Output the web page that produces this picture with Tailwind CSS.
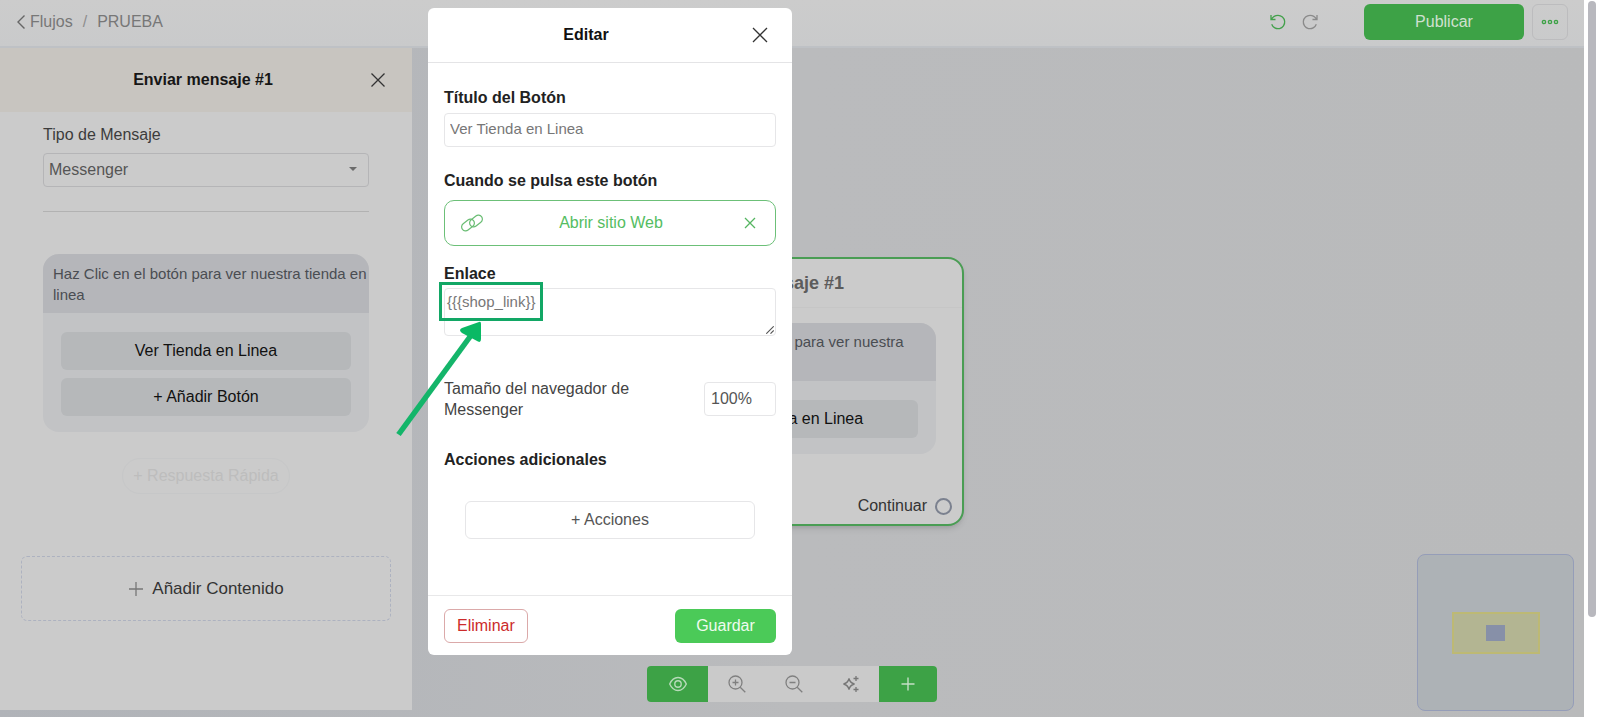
<!DOCTYPE html>
<html lang="es">
<head>
<meta charset="utf-8">
<meta name="viewport" content="width=device-width, initial-scale=1">
<title>Flujos / PRUEBA</title>
<script src="https://cdn.jsdelivr.net/npm/@tailwindcss/browser@4"></script>
</head>
<body class="flex h-screen overflow-hidden bg-white font-['Liberation_Sans',Arial,sans-serif] text-base leading-5 text-[#333]">
<div class="relative flex min-w-0 flex-1 flex-col bg-linear-to-r from-[#b0b3b8] via-[#babbbd] via-50% to-[#b9babb]">

  <header class="flex h-12 shrink-0 items-start justify-between border-b-2 border-[#bec1c5] bg-linear-to-b from-[#cccccc] to-[#c9cacb] pt-1 pr-4 pl-4">
    <nav class="flex h-9 items-center text-[#777]" aria-label="Ruta">
      <a href="#" class="flex items-center gap-1">
        <svg class="h-4 w-2.5" viewBox="0 0 10 16" fill="none" stroke="#666" stroke-width="1.4"><path d="M8.500 1.500 2 8l6.500 6.500"/></svg>
        Flujos</a>
      <span class="px-2.5 text-[#8e8e8e]">/</span>
      <span>PRUEBA</span>
    </nav>
    <div class="flex items-center">
      <button class="mr-4" aria-label="Deshacer">
        <svg class="size-4" viewBox="0 0 16 16" fill="none" stroke="#43a04b" stroke-width="1.300"><path d="M1 1v4.500h4.500M1.300 5.300C3 2.500 5 1.300 8 1.300a6.700 6.700 0 1 1-6.300 9"/></svg>
      </button>
      <button class="mr-[46px]" aria-label="Rehacer">
        <svg class="size-4" viewBox="0 0 16 16" fill="none" stroke="#8a8a8a" stroke-width="1.300"><path d="M15 1v4.500h-4.500M14.700 5.300C13 2.500 11 1.300 8 1.300a6.700 6.700 0 1 0 6.300 9"/></svg>
      </button>
      <button class="mr-2 h-9 w-40 rounded-md bg-[#3da246] text-[#d0e0d0]">Publicar</button>
      <button class="flex size-9 items-center justify-center rounded-md border border-[#bcbcbe]" aria-label="Más opciones">
        <svg class="h-1.5 w-[18px]" viewBox="0 0 18 6" fill="none" stroke="#3da246" stroke-width="1.400"><circle cx="3" cy="3" r="1.600"/><circle cx="9" cy="3" r="1.600"/><circle cx="15" cy="3" r="1.600"/></svg>
      </button>
    </div>
  </header>

  <div class="flex min-h-0 flex-1">
    <aside class="mb-[7px] w-[412px] shrink-0 overflow-hidden bg-[#cbcbcb]">
      <div class="flex h-16 items-center bg-[#c8c5c0] pr-[26px] pl-6">
        <h2 class="flex-1 pl-3 text-center font-bold text-[#161616]">Enviar mensaje #1</h2>
        <button aria-label="Cerrar panel"><svg class="size-4" viewBox="0 0 16 16" stroke="#333" stroke-width="1.300"><path d="M1.500 1.500l13 13M14.500 1.500l-13 13"/></svg></button>
      </div>
      <div class="px-[43px] pt-3">
        <label for="tipo" class="block leading-[22px] text-[#3c3c3c]">Tipo de Mensaje</label>
        <div class="relative mt-[7px]">
          <select id="tipo" class="block h-[34px] w-full appearance-none rounded border border-[#b5b5b7] bg-transparent px-[5px] text-[#555]"><option>Messenger</option></select>
          <svg class="pointer-events-none absolute top-[14px] right-3 h-1 w-2" viewBox="0 0 8 4" fill="#6b6b6b"><path d="M0 0h8L4 4z"/></svg>
        </div>
        <hr class="mt-6 border-[#b2b2b2]">
        <div class="mt-[42px] overflow-hidden rounded-[16px] bg-[#c2c3c5]">
          <p class="bg-[#b5b6ba] pt-[9px] pb-2 pl-2.5 text-[15px] leading-[21px] text-[#4a4d52]">Haz Clic en el botón para ver nuestra tienda en linea</p>
          <div class="flex flex-col gap-2 px-[18px] pt-[19px] pb-4 text-[#111]">
            <button class="h-[38px] rounded-md bg-[#b6b8ba]">Ver Tienda en Linea</button>
            <button class="h-[38px] rounded-md bg-[#b6b8ba]">+ Añadir Botón</button>
          </div>
        </div>
        <div class="mt-[26px] flex justify-center"><button class="h-9 rounded-full border border-[#c6c7c8] px-2.5 text-[#bdbdbd]">+ Respuesta Rápida</button></div>
      </div>
      <div class="px-[21px] pt-[62px]">
        <button class="flex h-[65px] w-full items-center justify-center gap-2 rounded-md border border-dashed border-[#adb2c0] text-[17px]">
          <svg class="size-4" viewBox="0 0 16 16" stroke="#777" stroke-width="1.300"><path d="M8 1v14M1 8h14"/></svg>
          Añadir Contenido</button>
      </div>
    </aside>

    <main class="relative min-w-0 flex-1">
      <!-- Flow node on the free canvas -->
      <section class="absolute top-[209px] left-[208px] w-[344px] rounded-[16px] border-2 border-[#4a9d54] bg-[#cbcbcb] pb-2 shadow-md shadow-black/10">
        <h3 class="border-b border-[#c6c6c6] pt-3.5 pr-[118px] pb-3.5 text-right text-lg leading-5 font-bold whitespace-nowrap text-[#5c5c5c]">Enviar mensaje #1</h3>
        <div class="mx-[26px] mt-[15px] overflow-hidden rounded-[16px] bg-[#c2c3c5]">
          <p class="bg-[#b5b6ba] px-2 pt-2 pb-2 text-[15px] leading-[21px] text-[#4a4d52]">Haz Clic en el botón para ver nuestra tienda en linea</p>
          <div class="flex px-[18px] pt-[19px] pb-4 text-[#111]"><button class="h-[38px] flex-1 rounded-md bg-[#b6b8ba]">Ver Tienda en Linea</button></div>
        </div>
        <div class="mt-[42px] flex items-center justify-end gap-2 pr-2.5">Continuar <span class="size-[17px] rounded-full border-2 border-[#7b818f]"></span></div>
      </section>
      <!-- Minimap -->
      <div class="absolute right-2.5 bottom-1.5 flex size-[157px] items-center justify-center rounded-lg border border-[#959db8] bg-[#adb2b6]">
        <div class="flex h-[42px] w-[88px] items-center justify-center border-2 border-[#bdb974] bg-[#b3b592]"><div class="h-4 w-[19px] bg-[#8790a8]"></div></div>
      </div>
    </main>
  </div>

  <!-- Canvas tools -->
  <div class="absolute bottom-[15px] left-1/2 flex h-9 w-[290px] -translate-x-1/2 overflow-hidden rounded bg-[#cacaca]">
    <button class="flex w-[61px] items-center justify-center bg-[#3da246]" aria-label="Vista previa"><svg class="h-4 w-[18px]" viewBox="0 0 18 16" fill="none" stroke="#b7dab9" stroke-width="1.400"><path d="M.7 8C2.500 4 5.500 1.500 9 1.500S15.500 4 17.300 8C15.500 12 12.500 14.500 9 14.500S2.500 12 .7 8z"/><circle cx="9" cy="8" r="3.200"/></svg></button>
    <button class="flex flex-1 items-center justify-center" aria-label="Acercar"><svg class="size-[18px]" viewBox="0 0 18 18" fill="none" stroke="#808080" stroke-width="1.300"><circle cx="7.500" cy="7.500" r="6.500"/><path d="M12.200 12.200 17.300 17.300M4.500 7.500h6M7.500 4.500v6"/></svg></button>
    <button class="flex flex-1 items-center justify-center" aria-label="Alejar"><svg class="size-[18px]" viewBox="0 0 18 18" fill="none" stroke="#808080" stroke-width="1.300"><circle cx="7.500" cy="7.500" r="6.500"/><path d="M12.200 12.200 17.300 17.300M4.500 7.500h6"/></svg></button>
    <button class="flex flex-1 items-center justify-center" aria-label="Ordenar"><svg class="size-[18px]" viewBox="0 0 18 18" fill="none" stroke="#777" stroke-width="1.300"><path d="M7 3.500Q8 8 12.500 9 8 10 7 14.500 6 10 1.500 9 6 8 7 3.500zM14 1v5M11.500 3.500h5M14 12v5M11.500 14.500h5"/></svg></button>
    <button class="flex w-[58px] items-center justify-center bg-[#3da246]" aria-label="Añadir"><svg class="size-3.5" viewBox="0 0 14 14" stroke="#c5dfc6" stroke-width="1.400"><path d="M7 .5v13M.5 7h13"/></svg></button>
  </div>

  <!-- Edit dialog -->
  <div role="dialog" aria-labelledby="dlg" class="absolute top-2 left-[428px] w-[364px] rounded-md bg-white">
    <div class="flex h-[55px] items-center border-b border-[#e4e4e6] px-6">
      <h2 id="dlg" class="flex-1 pr-8 text-center font-bold text-[#111]">Editar</h2>
      <button aria-label="Cerrar"><svg class="size-4" viewBox="0 0 16 16" stroke="#333" stroke-width="1.300"><path d="M1 1l14 14M15 1l-14 14"/></svg></button>
    </div>
    <div class="px-4 pt-[25px] pb-14">
      <label for="titulo" class="block font-bold text-[#222]">Título del Botón</label>
      <input id="titulo" value="Ver Tienda en Linea" class="mt-[5px] block h-[34px] w-full rounded border border-[#e6e6e8] px-[5px] pb-1 text-[15px] text-[#777]">
      <h3 class="mt-6 font-bold text-[#222]">Cuando se pulsa este botón</h3>
      <div class="mt-[9px] flex h-[46px] items-center rounded-[10px] border border-[#6cc078] px-4 text-[#55bd62]">
        <svg class="h-[18px] w-[22px]" viewBox="0 0 22 18" fill="none" stroke="#6abd74" stroke-width="1.200"><rect x="-7" y="-4" width="14" height="8" rx="4" transform="translate(7 11) rotate(-38)"/><rect x="-7" y="-4" width="14" height="8" rx="4" transform="translate(15 7) rotate(-38)"/></svg>
        <button class="flex-1 pr-1 text-center">Abrir sitio Web</button>
        <button aria-label="Quitar acción"><svg class="size-4" viewBox="0 0 16 16" stroke="#55b561" stroke-width="1.300"><path d="M2 3l10 10M12 3 2 13"/></svg></button>
      </div>
      <label for="enlace" class="mt-[18px] block font-bold text-[#222]">Enlace</label>
      <div class="relative mt-1">
        <textarea id="enlace" class="block h-12 w-full resize-none overflow-hidden rounded border border-[#e6e6e8] px-0.5 pt-1 text-[15px] leading-[18px] text-[#777]">{{{shop_link}}</textarea>
        <svg class="pointer-events-none absolute right-0.5 bottom-0.5 size-2" viewBox="0 0 8 8" stroke="#555" stroke-width="1.100"><path d="M.3 7.700 7.700.3M4.500 7.700 7.700 4.500"/></svg>
        <!-- Highlight frame and pointer arrow -->
        <div class="pointer-events-none absolute -top-1.5 -left-[5px] h-[39px] w-[104px] border-3 border-[#12a765]"></div>
        <svg class="pointer-events-none absolute top-[33px] -left-[50px] h-[118px] w-[92px]" viewBox="0 0 92 118"><path d="M4.500 113.500 78 13" stroke="#14b56a" stroke-width="5.500" fill="none"/><path d="M85 1 68 7Q64 9 68 12L84 20.500Q87 22 87 18V3Q87 0 85 1z" fill="#09b964"/></svg>
      </div>
      <div class="mt-[42px] flex items-center justify-between text-[#444]">
        <label for="nav" class="w-[200px] leading-[21px]">Tamaño del navegador de Messenger</label>
        <input id="nav" value="100%" class="h-[34px] w-[72px] rounded border border-[#e6e6e8] px-1.5 text-[#555]">
      </div>
      <h3 class="mt-[30px] font-bold text-[#222]">Acciones adicionales</h3>
      <div class="mt-[31px] flex px-[21px]"><button class="h-[38px] flex-1 rounded-md border border-[#e6e6e8] text-[#555]">+ Acciones</button></div>
    </div>
    <div class="flex items-center justify-between border-t border-[#e8e8e9] px-4 pt-[13px] pb-3">
      <button class="h-[34px] rounded-md border border-[#dba9a9] px-3 text-[#cc2b2b]">Eliminar</button>
      <button class="h-[34px] w-[101px] rounded-md bg-[#4bca58] text-[#effbef]">Guardar</button>
    </div>
  </div>
</div>
<!-- Page scrollbar -->
<div class="w-4 shrink-0 bg-white px-1 pt-px"><div class="h-[86%] w-2 rounded-full bg-[#b8b8be]"></div></div>
</body>
</html>
